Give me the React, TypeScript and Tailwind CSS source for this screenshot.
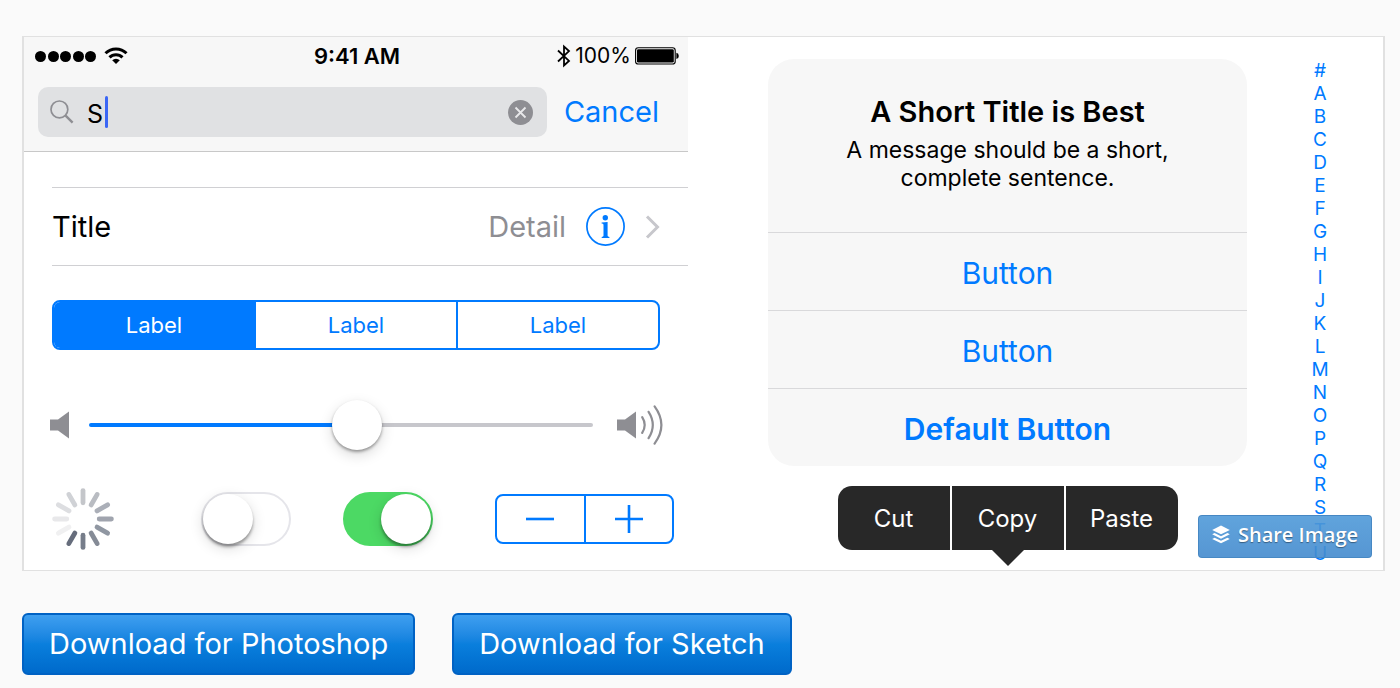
import React, { useState } from "react";

const letters = "#ABCDEFGHIJKLMNOPQRSTU".split("");

const spokes = ["#c4c6ca", "#b9bcc2", "#abafb8", "#a0a4ae", "#9097a2", "#858b96", "#767d8a", "#666d7c", "#f0f0f1", "#e8e8ea", "#dddee1", "#d0d2d6"];

const WifiIcon = () => (
    <svg width="24" height="18" viewBox="0 0 24 18" fill="none" stroke="#000" strokeWidth="3" aria-hidden="true">
        <path d="M1.5 6.2a15 15 0 0 1 21 0" />
        <path d="M5.5 10.4a9.2 9.2 0 0 1 13 0" />
        <path d="M12 17l-3.8-3.8a5.4 5.4 0 0 1 7.6 0z" fill="#000" stroke="none" />
    </svg>
);

const BluetoothIcon = () => (
    <svg width="14" height="24" viewBox="0 0 14 24" fill="none" stroke="#000" strokeWidth="1.8" aria-hidden="true">
        <path d="M1 6.5l11 10.4-5 4.6V2.5l5 4.6L1 17.5" />
    </svg>
);

const BatteryIcon = () => (
    <svg width="44" height="18" viewBox="0 0 44 18" aria-hidden="true">
        <rect x=".6" y=".8" width="39.6" height="16.2" rx="2.6" fill="none" stroke="#000" strokeWidth="1.1" />
        <rect x="2" y="2.2" width="36.8" height="13.4" rx="1.4" />
        <path d="M41.4 5.8q2.4.4 2.4 3.1t-2.4 3.1z" />
    </svg>
);

const SearchIcon = () => (
    <svg width="24" height="24" viewBox="0 0 24 24" fill="none" stroke="#8e8e93" aria-hidden="true">
        <circle cx="9.4" cy="9.4" r="8.4" strokeWidth="1.7" />
        <path d="M15.6 15.6l7 7" strokeWidth="2.4" />
    </svg>
);

const ShareIcon = () => (
    <svg width="18" height="19" viewBox="0 0 18 19" fill="#fff" aria-hidden="true">
        <path d="M9 .4l8.8 4.5L9 9.2.2 4.9z" />
        <path d="M2.6 8.1L9 11.2l6.4-3.1 2.4 1.2L9 13.7.2 9.3z" />
        <path d="M2.6 12.7L9 15.8l6.4-3.1 2.4 1.2L9 18.3.2 13.9z" />
    </svg>
);

const Spinner = () => (
    <svg width="62" height="62" viewBox="0 0 62 62" strokeWidth="4.8" strokeLinecap="round" role="img" aria-label="Loading">
        {spokes.map((color, i) => (
            <path key={i} d="M31 2.6v12.2" stroke={color} transform={`rotate(${i * 30} 31 31)`} />
        ))}
    </svg>
);

const Switch = ({ label, initial }: { label: string; initial: boolean }) => {
    const [checked, setChecked] = useState(initial);

    return (
        <input
            type="checkbox"
            role="switch"
            aria-label={label}
            checked={checked}
            onChange={(e) => setChecked(e.target.checked)}
            className="block h-[54px] w-[90px] appearance-none rounded-full border-2 border-[#e5e5ea] bg-white before:block before:size-[50px] before:rounded-full before:bg-white before:shadow-[0_3px_3px_rgba(0,0,0,0.35),0_4px_14px_rgba(0,0,0,0.15)] checked:border-[#4cd964] checked:bg-[#4cd964] checked:before:ml-9"
        />
    );
};

const Phone = () => {
    const [query, setQuery] = useState("S");
    const [segment, setSegment] = useState(0);
    const [volume, setVolume] = useState(107);

    return (
        <div>
            <div className="border-b border-[#c8c8c8] bg-[#f7f7f7] pb-[14px]">
                <div className="grid h-[50px] grid-cols-3 items-start pt-1 pr-[9px] pl-[11px] text-[21px] leading-[30px]">
                    <div className="flex h-[30px] items-center gap-2">
                        <div className="flex w-[61px] justify-between">
                            {[1, 2, 3, 4, 5].map((n) => (
                                <span key={n} className="size-[11px] rounded-full bg-black" />
                            ))}
                        </div>
                        <WifiIcon />
                    </div>
                    <div className="text-center text-[22px] font-semibold">9:41 AM</div>
                    <div className="flex h-[30px] items-center justify-end gap-1">
                        <BluetoothIcon />
                        <span>100%</span>
                        <BatteryIcon />
                    </div>
                </div>
                <div className="flex items-center pr-[29px] pl-[14px]">
                    <div className="flex h-[50px] flex-1 items-center rounded-[10px] bg-[#e0e1e3] pr-[14px] pl-3">
                        <SearchIcon />
                        <input
                            type="text"
                            aria-label="Search"
                            value={query}
                            onChange={(e) => setQuery(e.target.value)}
                            className="ml-[13px] field-sizing-content pt-[3px] text-[25px] leading-8 outline-none"
                        />
                        <span className="ml-[2px] h-8 w-[3px] rounded-full bg-[#3a66f5]" />
                        <button type="button" aria-label="Clear" onClick={() => setQuery("")} className="ml-auto">
                            <svg width="25" height="25" viewBox="0 0 25 25">
                                <circle cx="12.5" cy="12.5" r="12.5" fill="#8e8e93" />
                                <path d="M7.5 7.5l10 10M17.5 7.5l-10 10" stroke="#e8e8ea" strokeWidth="1.8" />
                            </svg>
                        </button>
                    </div>
                    <button type="button" className="ml-[17px] text-[29px] leading-9 text-[#007aff]">
                        Cancel
                    </button>
                </div>
            </div>

            <div className="mt-[35px] ml-7 flex h-[79px] items-center border-y border-[#d0d0d3] pr-7 text-[29px]">
                <span>Title</span>
                <span className="ml-auto text-[#8e8e93]">Detail</span>
                <button type="button" aria-label="More info" className="ml-5">
                    <svg width="39" height="39" viewBox="0 0 39 39" fill="#007aff">
                        <circle cx="19.5" cy="19.5" r="18.6" fill="none" stroke="#007aff" strokeWidth="1.7" />
                        <circle cx="19.3" cy="10.8" r="2.7" />
                        <path d="M15.6 15.5l6-.6v13.9q0 1.1 1.8 1.2v.9h-7.7V30q1.8-.1 1.8-1.2v-11q0-1.4-1.9-1.4z" />
                    </svg>
                </button>
                <svg className="ml-5" width="15" height="24" viewBox="0 0 15 24" fill="none" stroke="#c7c7cc" strokeWidth="3" aria-hidden="true">
                    <path d="M2 1.5L12.5 12 2 22.5" />
                </svg>
            </div>

            <div className="mx-7 mt-[34px] flex h-[50px] divide-x-2 divide-[#007aff] overflow-hidden rounded-lg border-2 border-[#007aff] text-[22px]">
                {[0, 1, 2].map((n) => (
                    <button key={n} type="button" onClick={() => setSegment(n)} className={segment === n ? "flex-1 bg-[#007aff] text-white" : "flex-1 text-[#007aff]"}>
                        Label
                    </button>
                ))}
            </div>

            <div className="mt-[50px] flex h-[50px] items-center pr-[25px] pl-[26px]">
                <svg width="19" height="28" viewBox="0 0 19 28" fill="#8e8e93" aria-hidden="true">
                    <path d="M0 8.5h8L19 .5v27l-11-8H0z" />
                </svg>
                <input
                    type="range"
                    aria-label="Volume"
                    min={0}
                    max={200}
                    value={volume}
                    onChange={(e) => setVolume(Number(e.target.value))}
                    style={{ backgroundImage: `linear-gradient(to right, #007aff ${volume / 2}%, #c7c7cc ${volume / 2}%)` }}
                    className="mr-6 ml-5 h-1 flex-1 appearance-none rounded-full [&::-webkit-slider-thumb]:size-[50px] [&::-webkit-slider-thumb]:appearance-none [&::-webkit-slider-thumb]:rounded-full [&::-webkit-slider-thumb]:bg-white [&::-webkit-slider-thumb]:shadow-[0_2px_3px_rgba(0,0,0,0.35),0_5px_14px_rgba(0,0,0,0.15)]"
                />
                <svg width="46" height="40" viewBox="0 0 46 40" fill="none" stroke="#8e8e93" strokeWidth="2.2" strokeLinecap="round" aria-hidden="true">
                    <path d="M0 14.5h8l11-8v27l-11-8H0z" fill="#8e8e93" stroke="none" />
                    <path d="M25.2 12.2q5 7.8 0 15.6M31.6 6.8q8.4 13.2 0 26.4M37.6 1.4q13.6 18.6 0 37.2" />
                </svg>
            </div>

            <div className="mt-[38px] grid grid-cols-[149fr_142fr_152fr_179fr] items-center pr-[14px] pb-5 pl-7">
                <Spinner />
                <Switch label="First option" initial={false} />
                <Switch label="Second option" initial={true} />
                <div className="flex h-[50px] divide-x-2 divide-[#007aff] rounded-lg border-2 border-[#007aff]">
                    <button type="button" aria-label="Decrease" className="flex flex-1 items-center justify-center">
                        <svg width="28" height="28" stroke="#007aff" strokeWidth="2.6">
                            <path d="M0 14h28" />
                        </svg>
                    </button>
                    <button type="button" aria-label="Increase" className="flex flex-1 items-center justify-center">
                        <svg width="28" height="28" stroke="#007aff" strokeWidth="2.6">
                            <path d="M0 14h28M14 0v28" />
                        </svg>
                    </button>
                </div>
            </div>
        </div>
    );
};

const Alert = () => (
    <div className="rounded-[26px] bg-[#f7f7f7] text-center">
        <div className="h-[173px] pt-9">
            <h2 className="text-[29px] leading-[34px] font-semibold">A Short Title is Best</h2>
            <p className="mt-[7px] text-[23px] leading-7">
                A message should be a short,
                <br />
                complete sentence.
            </p>
        </div>
        <button type="button" className="block h-[78px] w-full border-t border-[#d9d9db] pt-[3px] text-[30px] text-[#007aff]">
            Button
        </button>
        <button type="button" className="block h-[78px] w-full border-t border-[#d9d9db] pt-[3px] text-[30px] text-[#007aff]">
            Button
        </button>
        <button type="button" className="block h-[78px] w-full border-t border-[#d9d9db] pt-[3px] text-[30px] font-semibold text-[#007aff]">
            Default Button
        </button>
    </div>
);

const EditMenu = () => (
    <div className="mx-auto mt-5 w-[340px]">
        <div className="flex h-16 gap-[2px] overflow-hidden rounded-[14px] text-2xl text-white">
            <button type="button" className="flex-1 bg-[#282828] pt-[2px]">Cut</button>
            <button type="button" className="flex-1 bg-[#282828] pt-[2px]">Copy</button>
            <button type="button" className="flex-1 bg-[#282828] pt-[2px]">Paste</button>
        </div>
        <svg className="mx-auto block" width="32" height="16" viewBox="0 0 32 16" fill="#282828" aria-hidden="true">
            <path d="M0 0h32L16 16z" />
        </svg>
    </div>
);

export default function App() {
    return (
        <main className="min-h-screen bg-[#fafafa] pt-9 pr-[15px] pb-3 pl-[22px] font-[Inter,sans-serif] text-black">
            <div className="relative grid grid-cols-[664fr_695fr] border-x-2 border-y border-[#e1e1e1] bg-white">
                <Phone />
                <div className="flex pt-[22px] pl-20">
                    <div className="flex-1">
                        <Alert />
                        <EditMenu />
                    </div>
                    <nav aria-label="Index" className="flex w-[136px] flex-col items-center pl-[10px] text-[19px] leading-[23px] text-[#007aff]">
                        {letters.map((letter) => (
                            <a key={letter} href={`#${letter}`}>
                                {letter}
                            </a>
                        ))}
                    </nav>
                </div>
                <button
                    type="button"
                    className="absolute right-[11px] bottom-3 flex h-[43px] items-center gap-2 rounded border border-[#4586c2]/90 bg-linear-to-b from-[#4f9ad9]/90 to-[#448bce]/90 px-[13px] pb-1 font-['Open_Sans',sans-serif] text-xl font-semibold text-white text-shadow-[0_1px_1px_rgba(0,0,0,0.4)]"
                >
                    <ShareIcon />
                    Share Image
                </button>
            </div>

            <div className="mt-[42px] flex gap-[37px] text-[29px] text-white">
                <button type="button" className="h-[62px] rounded-md border-2 border-[#0062c4] bg-linear-to-b from-[#3e9ff0] via-[#0a7fdd] to-[#006acb] px-[25px]">
                    Download for Photoshop
                </button>
                <button type="button" className="h-[62px] rounded-md border-2 border-[#0062c4] bg-linear-to-b from-[#3e9ff0] via-[#0a7fdd] to-[#006acb] px-[25px]">
                    Download for Sketch
                </button>
            </div>
        </main>
    );
}
